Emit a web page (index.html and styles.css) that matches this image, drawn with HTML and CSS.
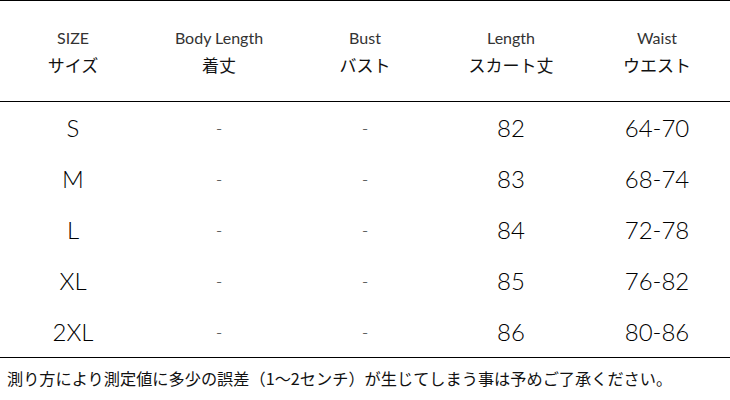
FILE: index.html
```html
<!DOCTYPE html>
<html lang="ja">
<head>
<meta charset="utf-8">
<title>Size chart</title>
<link rel="stylesheet" href="styles.css">
</head>
<body>
<div class="chart">
  <div class="row head">
    <div class="cell"><span class="en">SIZE</span><span class="ja">サイズ</span></div>
    <div class="cell"><span class="en">Body Length</span><span class="ja">着丈</span></div>
    <div class="cell"><span class="en">Bust</span><span class="ja">バスト</span></div>
    <div class="cell"><span class="en">Length</span><span class="ja">スカート丈</span></div>
    <div class="cell"><span class="en">Waist</span><span class="ja">ウエスト</span></div>
  </div>
  <div class="body">
    <div class="row data"><div class="cell">S</div><div class="cell dash">-</div><div class="cell dash">-</div><div class="cell">82</div><div class="cell">64-70</div></div>
    <div class="row data"><div class="cell">M</div><div class="cell dash">-</div><div class="cell dash">-</div><div class="cell">83</div><div class="cell">68-74</div></div>
    <div class="row data"><div class="cell">L</div><div class="cell dash">-</div><div class="cell dash">-</div><div class="cell">84</div><div class="cell">72-78</div></div>
    <div class="row data"><div class="cell">XL</div><div class="cell dash">-</div><div class="cell dash">-</div><div class="cell">85</div><div class="cell">76-82</div></div>
    <div class="row data"><div class="cell">2XL</div><div class="cell dash">-</div><div class="cell dash">-</div><div class="cell">86</div><div class="cell">80-86</div></div>
  </div>
  <p class="note">測り方により測定値に多少の誤差（1～2センチ）が生じてしまう事は予めご了承ください。</p>
</div>
</body>
</html>
```
FILE: styles.css
```css
html, body {
  margin: 0;
  padding: 0;
  background: #fff;
}
.chart {
  width: 730px;
  color: #111;
  font-family: Lato, "Noto Sans CJK JP", sans-serif;
  border-top: 1px solid #000;
}
.row {
  display: grid;
  grid-template-columns: repeat(5, 1fr);
}
.head {
  height: 100px;
  border-bottom: 1px solid #000;
  align-items: center;
}
.head .cell {
  display: flex;
  flex-direction: column;
  align-items: center;
  line-height: 27px;
}
.en {
  font-size: 16px;
  font-weight: 400;
  color: #333;
}
.ja {
  font-family: "Noto Sans CJK JP", sans-serif;
  font-size: 17px;
}
.body {
  border-bottom: 1px solid #000;
}
.data {
  height: 51px;
  align-items: center;
}
.data .cell {
  text-align: center;
  font-size: 24px;
  font-weight: 300;
  color: #000;
}
.data .dash {
  font-size: 18px;
  color: #333;
}
.note {
  margin: 0;
  padding: 8px 0 0 7px;
  font-family: "Noto Sans CJK JP", sans-serif;
  font-size: 16.2px;
  line-height: 24px;
}
```
